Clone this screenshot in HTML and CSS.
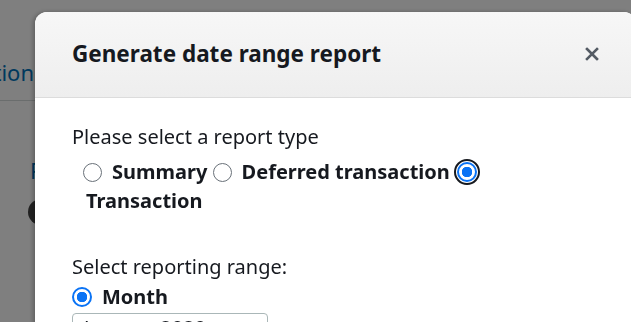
FILE: index.html
```html
<!DOCTYPE html>
<html lang="en">

<head>
    <meta charset="UTF-8">
    <meta name="viewport" content="width=device-width, initial-scale=1.0">
    <title>Generate date range report</title>
    <link rel="stylesheet" href="styles.css">
</head>

<body>
    <div class="page">
        <div class="tabs">
            <span class="tab">Transaction</span>
        </div>
        <div class="section">
            <div class="section-title">Reports</div>
            <div class="avatar"></div>
        </div>
    </div>

    <div class="overlay"></div>

    <div class="modal">
        <div class="modal-header">
            <h2>Generate date range report</h2>
            <button class="close" aria-label="Close">
                <svg width="14" height="14" viewBox="0 0 14 14">
                    <path d="M2 2 L12 12 M12 2 L2 12" stroke="#545b64" stroke-width="2.6" stroke-linecap="square" />
                </svg>
            </button>
        </div>

        <div class="modal-body">
            <div class="field-label">Please select a report type</div>
            <div class="radio-group">
                <label class="option"><input type="radio" name="type"><span>Summary</span></label>
                <label class="option"><input type="radio" name="type"><span>Deferred transaction</span></label>
                <label class="option"><input type="radio" name="type" class="focused" checked><span>Transaction</span></label>
            </div>

            <div class="field-label range-label">Select reporting range:</div>
            <div class="radio-group range">
                <label class="option"><input type="radio" name="range" checked><span>Month</span></label>
            </div>
            <div class="month-input">January 2020</div>
        </div>
    </div>
</body>

</html>
```

FILE: styles.css
```css
* {
    margin: 0;
    padding: 0;
    box-sizing: border-box;
}

body {
    background-color: #fff;
    font-family: "Noto Sans", "Open Sans", Arial, sans-serif;
    color: #16191f;
    overflow: hidden;
}

.page {
    height: 322px;
}

.tabs {
    display: flex;
    justify-content: flex-end;
    width: 100%;
    height: 101px;
    padding: 57px 597px 0 0;
    border-bottom: 1px solid #d5dbdb;
    white-space: nowrap;
}

.tab {
    font-size: 22px;
    line-height: 30px;
    color: #0073bb;
}

.section {
    padding: 54px 0 0 30px;
}

.section-title {
    font-size: 22px;
    color: #0073bb;
    line-height: 30px;
}

.avatar {
    width: 26px;
    height: 26px;
    border-radius: 50%;
    background-color: #444;
    margin-top: 14px;
    margin-left: -2px;
}

.overlay {
    position: fixed;
    inset: 0;
    background-color: rgba(0, 0, 0, 0.5);
}

.modal {
    position: fixed;
    left: 35px;
    top: 12px;
    width: 601px;
    height: 400px;
    background-color: #fff;
    border-radius: 12px;
    box-shadow: -2px 0 4px rgba(0, 0, 0, 0.25);
    overflow: hidden;
}

.modal-header {
    height: 86px;
    display: flex;
    align-items: center;
    justify-content: space-between;
    padding: 0 37px 2px 37px;
    background: linear-gradient(#f7f7f7, #eeeeee);
    border-bottom: 1px solid #dcdcdc;
}

.modal-header h2 {
    font-size: 22.5px;
    font-weight: 700;
    color: #16191f;
}

.close {
    border: none;
    background: none;
    display: flex;
    padding: 0;
}

.modal-body {
    padding: 25px 37px 0 37px;
}

.field-label {
    font-size: 20px;
    line-height: 28px;
}

.radio-group {
    padding-left: 14px;
    font-size: 20px;
    font-weight: 700;
    line-height: 29px;
    margin-top: 6px;
}

.option {
    margin-right: 3px;
}

.option input {
    appearance: none;
    display: inline-block;
    width: 19px;
    height: 19px;
    border: 1.5px solid #687078;
    border-radius: 50%;
    vertical-align: -3px;
    margin: 0 10px 0 -3px;
    background-color: #fff;
}

.option input:checked {
    border: 2.5px solid #0a73f5;
    background: radial-gradient(circle, #0a73f5 0 5px, #fff 5.5px);
}

.option input.focused {
    width: 20px;
    height: 20px;
    margin: 0 10px 0 -1px;
    outline: 2.5px solid #16191f;
    outline-offset: 1.5px;
    border-width: 2px;
}

.range-label {
    margin-top: 38px;
}

.range {
    padding-left: 3px;
    margin-top: 1px;
}

.range .option input {
    width: 20px;
    height: 20px;
}

.month-input {
    margin-top: 2px;
    width: 196px;
    height: 34px;
    border: 1px solid #aab7b8;
    border-radius: 4px;
    padding: 4px 11px 0;
    font-size: 20px;
    line-height: 20px;
}
```
